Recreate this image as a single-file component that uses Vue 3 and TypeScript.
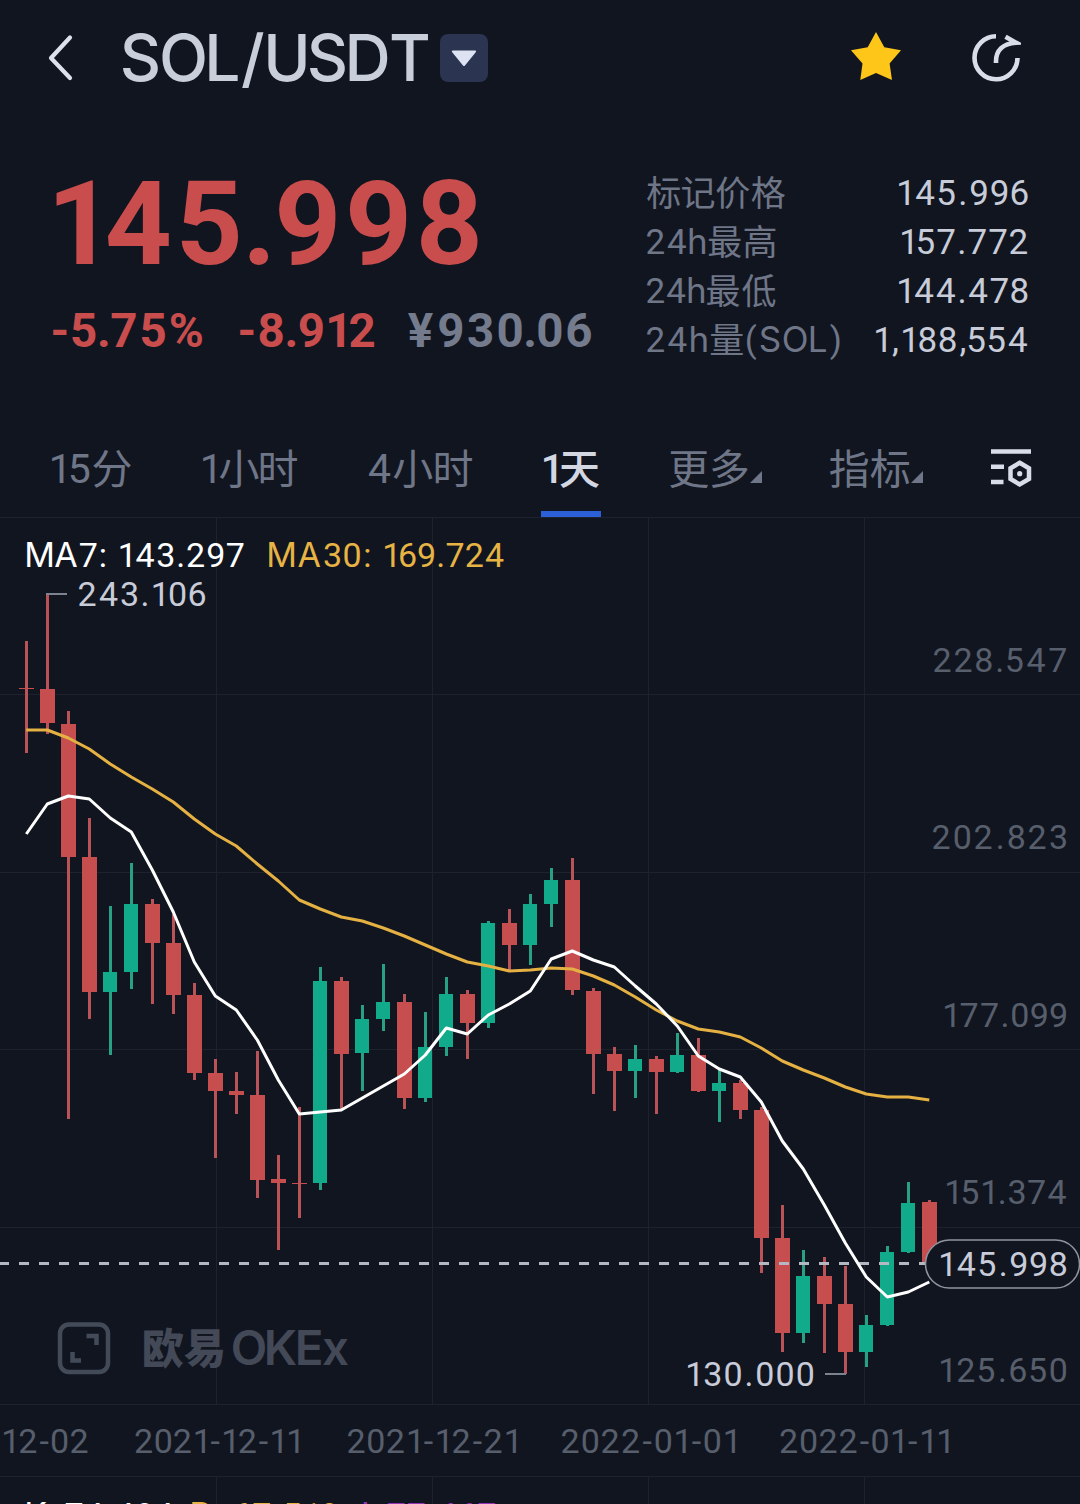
<script setup lang="ts">
import { h, type FunctionalComponent } from 'vue'

const DIGITS = 'Roboto, "Noto Sans CJK SC", sans-serif'
const LETTERS = 'Inter, Roboto, sans-serif'
const CAP = 0.711

const ctx = document.createElement('canvas').getContext('2d')!

const isLetter = (c: string) => /[A-Za-z/]/.test(c)
const isHan = (c: string) => /[\u4e00-\u9fff]/.test(c)
const kind = (c: string) => (isLetter(c) ? 'letter' : isHan(c) ? 'han' : 'digit')

/* Spreads the characters so that the gaps between their strokes are equal. */
function spread(text: string, width: number, size: number, weight: number): number[] {
  const bold = weight > 600
  const source = [...text]
  const last = source.length - 1
  const chars = source.map((c, i) => {
    ctx.font = `${weight} ${size * 4}px ${isLetter(c) ? LETTERS : DIGITS}`
    const m = ctx.measureText(c)
    if (c === ' ') return { left: 0, ink: size * 0.1, before: 0, after: 0 }
    let before = 0
    let after = 0
    if (c === '.' || c === ':') before = after = (bold ? -0.035 : 0.04) * size
    if (c === '1') {
      after = (bold ? 0 : 0.075) * size
      before = bold ? 0 : 0.04 * size
    }
    return {
      left: -m.actualBoundingBoxLeft / 4,
      ink: (m.actualBoundingBoxRight + m.actualBoundingBoxLeft) / 4,
      before: i === 0 ? 0 : before,
      after: i === last ? 0 : after,
    }
  })
  const total = chars.reduce((sum, c) => sum + c.ink + c.before + c.after, 0)
  const gap = last > 0 ? (width - total) / last : 0
  let pen = 0
  return chars.map((c) => {
    pen += c.before
    const x = pen - c.left
    pen += c.ink + c.after + gap
    return Math.round(x * 100) / 100
  })
}

interface RunProps {
  text: string
  w: number
  size: number
  x?: number
  y?: number
  weight?: number
}

const Run: FunctionalComponent<RunProps> = (p) => {
  const weight = p.weight ?? 400
  const y = p.y ?? 0
  const xs = spread(p.text, p.w, p.size, weight).map((v) => v + (p.x ?? 0))
  const parts: { text: string; kind: string; xs: number[] }[] = []
  ;[...p.text].forEach((c, i) => {
    const tail = parts[parts.length - 1]
    if (tail && tail.kind === kind(c)) {
      tail.text += c
      tail.xs.push(xs[i])
    } else {
      parts.push({ text: c, kind: kind(c), xs: [xs[i]] })
    }
  })
  return h(
    'text',
    { 'font-size': p.size, 'font-weight': weight, 'xml:space': 'preserve' },
    parts.map((part) =>
      h('tspan', {
        x: part.xs.join(' '),
        y: part.kind === 'han' ? y + p.size * 0.03 : y,
        'font-family': part.kind === 'letter' ? LETTERS : DIGITS,
      }, part.text),
    ),
  )
}
Run.props = ['text', 'w', 'size', 'x', 'y', 'weight']

/* A line of text whose box is exactly as wide as its strokes and as tall as its capitals. */
const Label: FunctionalComponent<RunProps> = (p) => {
  const cap = p.size * CAP
  return h('svg', { width: p.w, height: cap, style: 'display:block;overflow:visible;flex:none' }, [
    h(Run, { text: p.text, w: p.w, size: p.size, weight: p.weight, y: cap }),
  ])
}
Label.props = ['text', 'w', 'size', 'weight']

const stats = [
  { name: '标记价格', nw: 138, value: '145.996', vw: 128.5 },
  { name: '24h最高', nw: 128.5, value: '157.772', vw: 125 },
  { name: '24h最低', nw: 128.5, value: '144.478', vw: 128.5 },
  { name: '24h量(SOL)', nw: 192.5, value: '1,188,554', vw: 151 },
]

const tabs = [
  { text: '15分', w: 79, gap: 0 },
  { text: '1小时', w: 94, gap: 72 },
  { text: '4小时', w: 103, gap: 72 },
  { text: '1天', w: 55, gap: 71, active: true },
  { text: '更多', w: 77.5, gap: 69, more: true },
  { text: '指标', w: 79, gap: 68.5, more: true },
]

/* high, low, body top, body bottom, rising */
type Candle = [number, number, number, number, (0 | 1)?]
const candles: Candle[] = [
  [641, 753, 688, 689], [594, 734, 689, 723], [711, 1119, 724, 857], [818, 1019, 857, 992],
  [906, 1055, 972, 992, 1], [863, 989, 904, 972, 1], [899, 1004, 904, 943], [914, 1014, 943, 995],
  [983, 1080, 995, 1073], [1059, 1158, 1073, 1091], [1072, 1114, 1091, 1095], [1051, 1198, 1095, 1180],
  [1155, 1250, 1179, 1183], [1107, 1218, 1183, 1184], [967, 1190, 981, 1183, 1], [977, 1110, 981, 1054],
  [1005, 1091, 1019, 1053, 1], [964, 1031, 1002, 1019, 1], [994, 1109, 1002, 1098], [1012, 1102, 1047, 1098, 1],
  [977, 1056, 994, 1047, 1], [990, 1059, 994, 1023], [921, 1028, 923, 1023, 1], [909, 970, 923, 945],
  [894, 965, 904, 945, 1], [868, 927, 880, 904, 1], [858, 995, 880, 990], [988, 1094, 991, 1054],
  [1047, 1111, 1054, 1071], [1045, 1098, 1059, 1071, 1], [1056, 1114, 1059, 1072], [1033, 1073, 1055, 1072, 1],
  [1038, 1092, 1055, 1091], [1070, 1122, 1083, 1091, 1], [1080, 1119, 1083, 1110], [1107, 1273, 1110, 1238],
  [1205, 1352, 1238, 1333], [1250, 1343, 1276, 1333, 1], [1257, 1353, 1276, 1304], [1266, 1374, 1304, 1352],
  [1315, 1367, 1325, 1352, 1], [1246, 1326, 1252, 1325, 1], [1182, 1253, 1203, 1252, 1], [1200, 1264, 1202, 1264],
]
const ma7 = [
  834, 804, 796, 799, 818, 832, 870, 912, 962, 996, 1010, 1040, 1080, 1114, 1112, 1110, 1098, 1086, 1074, 1055,
  1028, 1034, 1015, 1004, 991, 959, 951, 960, 967, 986, 1004, 1026, 1056, 1069, 1077, 1102, 1141, 1169, 1205,
  1243, 1277, 1297, 1292, 1282,
]
const ma30 = [
  730, 730, 738, 749, 764, 777, 789, 802, 819, 834, 846, 864, 881, 900, 909, 917, 921, 928, 936, 945, 954, 962,
  966, 971, 970, 968, 969, 976, 985, 997, 1010, 1021, 1029, 1032, 1037, 1048, 1061, 1070, 1078, 1087, 1094, 1097,
  1097, 1100,
]
const line = (ys: number[]) => ys.map((y, i) => `${26.3 + i * 21},${y}`).join(' ')

const axis = [
  { text: '228.547', x: 934, w: 132, y: 671.5 },
  { text: '202.823', x: 933, w: 133, y: 849 },
  { text: '177.099', x: 945, w: 121, y: 1026.5 },
  { text: '151.374', x: 947, w: 119, y: 1204 },
  { text: '125.650', x: 941, w: 125, y: 1381.5 },
]
const dates = [
  { text: '12-02', x: 4, w: 83.5 },
  { text: '2021-12-11', x: 135.5, w: 163 },
  { text: '2021-12-21', x: 348, w: 168 },
  { text: '2022-01-01', x: 562, w: 173 },
  { text: '2022-01-11', x: 780.5, w: 168 },
]
</script>

<template>
  <div class="screen">
    <header class="top">
      <svg class="back" width="26" height="48" viewBox="0 0 26 48">
        <path d="M23 3.500 4 24 23 44" />
      </svg>
      <Label class="pair" text="SOL/USDT" :w="305" :size="64" :weight="500" />
      <div class="drop">
        <svg width="26" height="17" viewBox="0 0 26 17"><path d="M1.500.500h23q1.200.600.400 1.600L14 15.600q-1 1-2 0L1 2.100Q.400 1 1.500.500z" /></svg>
      </div>
      <svg class="star" width="50" height="49" viewBox="0 0 50 49">
        <path d="M25 0 33.300 15.300 50 18.300 38.600 31.400 41 48 25 41 9.300 48 11.500 31.400 0 18.300 16.700 15.300z" />
      </svg>
      <svg class="share" width="50" height="50" viewBox="0 0 50 50">
        <path d="M25 3.300A21.500 21.500 0 1 0 46.500 25" />
        <path d="M25 30V28.500C25 17.500 32 10.500 45 9.700L34.500 3.800" />
      </svg>
    </header>

    <section class="summary">
      <div class="quote">
        <Label class="red" text="145.998" :w="422" :size="117" :weight="700" />
        <div class="changes">
          <Label class="red" text="-5.75%" :w="149" :size="47.500" :weight="700" />
          <Label class="red" text="-8.912" :w="134" :size="47.500" :weight="700" />
          <Label class="grey" text="¥930.06" :w="183" :size="47.500" :weight="700" />
        </div>
      </div>
      <div class="stats">
        <div v-for="s in stats" :key="s.name" class="stat">
          <Label class="name" :text="s.name" :w="s.nw" :size="35" />
          <Label class="value" :text="s.value" :w="s.vw" :size="35" />
        </div>
      </div>
    </section>

    <nav class="tabs">
      <div v-for="t in tabs" :key="t.text" class="tab" :class="{ active: t.active }" :style="{ marginLeft: t.gap + 'px' }">
        <Label :text="t.text" :w="t.w" :size="41" :weight="t.active ? 500 : 400" />
        <svg v-if="t.more" class="corner" width="12" height="12" viewBox="0 0 12 12"><path d="M12 0v12H0z" /></svg>
      </div>
      <svg class="settings" width="42" height="40" viewBox="0 0 42 40">
        <path d="M1 3.500H41M1 18.700H14M1 34H13.500" />
        <path class="hex" d="M29.700 14.800 39 20.200V31L29.700 36.500 20.500 31V20.200z" />
        <circle cx="29.700" cy="25.700" r="2.600" />
      </svg>
    </nav>

    <svg class="chart" width="1080" height="987" viewBox="0 517 1080 987">
      <path
        class="grid"
        d="M0 517.500H1080M0 694.500H1080M0 872.500H1080M0 1049.500H1080M0 1227.500H1080M0 1404.500H1080M0 1476.500H1080
           M216.500 517V1404M432.500 517V1404M648.500 517V1404M864.500 517V1404M216.500 1477V1504M432.500 1477V1504M648.500 1477V1504M864.500 1477V1504"
      />
      <g class="mark">
        <rect x="60" y="1324.500" width="48" height="47.500" rx="9" />
        <path d="M86.500 1336H96.500V1345M72.500 1352V1360.500H81" />
        <Run text="欧易" :x="144" :w="79" :y="1362.500" :size="42" :weight="900" />
        <Run text="OKEx" :x="233" :w="115" :y="1365" :size="47.500" :weight="600" />
      </g>

      <g class="axis">
        <Run v-for="a in axis" :key="a.text" :text="a.text" :x="a.x" :w="a.w" :y="a.y" :size="34" />
        <Run v-for="d in dates" :key="d.text" :text="d.text" :x="d.x" :w="d.w" :y="1453" :size="34" />
      </g>

      <g v-for="(c, i) in candles" :key="i" :class="c[4] ? 'up' : 'down'">
        <rect class="wick" :x="25 + i * 21" :y="c[0]" width="3" :height="c[1] - c[0]" />
        <rect :x="19 + i * 21" :y="c[2]" :width="c[4] ? 14 : 15" :height="c[3] - c[2]" />
      </g>

      <path class="dash" d="M-1 1263.500H929" />
      <path class="leader" d="M46 594H67M825 1374H846" />
      <polyline class="ma30" :points="line(ma30)" />
      <polyline class="ma7" :points="line(ma7)" />

      <g class="light">
        <Run text="243.106" :x="79" :w="126" :y="606" :size="34" />
        <Run text="130.000" :x="688" :w="125" :y="1386" :size="34" />
      </g>
      <rect class="pill" x="925.500" y="1240" width="154" height="48" rx="24" />
      <Run class="light" text="145.998" :x="941" :w="125" :y="1276" :size="34" />

      <g class="white">
        <Run text="MA7:" :x="27" :w="78" :y="567" :size="34" />
        <Run text="143.297" :x="120.500" :w="123" :y="567" :size="34" />
        <Run text="K: 74.494" :x="27" :w="146" :y="1527" :size="34" />
      </g>
      <g class="gold">
        <Run text="MA30:" :x="269" :w="100.500" :y="567" :size="34" />
        <Run text="169.724" :x="385" :w="118.500" :y="567" :size="34" />
        <Run text="D: 67.519" :x="192" :w="145" :y="1527" :size="34" />
      </g>
      <Run class="purple" text="J: 77.467" :x="352" :w="143" :y="1527" :size="34" />
    </svg>
  </div>
</template>

<style>
body {
  background: #111520;
}
</style>

<style scoped>
.screen {
  width: 1080px;
  height: 1504px;
  overflow: hidden;
  background: #111520;
  display: flex;
  flex-direction: column;
}
svg {
  display: block;
  flex: none;
}
.top {
  height: 116px;
  box-sizing: border-box;
  padding: 0 59px 0 47px;
  display: flex;
  align-items: center;
}
.back path {
  fill: none;
  stroke: #dde1ec;
  stroke-width: 4.200;
  stroke-linecap: round;
  stroke-linejoin: round;
}
.pair {
  margin-left: 50px;
  margin-bottom: 1px;
  fill: #c9cedb;
}
.drop {
  width: 48px;
  height: 48px;
  margin-left: 12px;
  border-radius: 8px;
  background: #2b3450;
  display: flex;
  align-items: center;
  justify-content: center;
}
.drop path {
  fill: #dde3f2;
}
.star {
  margin-left: auto;
  margin-bottom: 3px;
}
.star path {
  fill: #fdc619;
}
.share {
  margin-left: 70px;
}
.share path {
  fill: none;
  stroke: #d9ddea;
  stroke-width: 4.600;
}
.summary {
  display: flex;
  height: 320px;
  box-sizing: border-box;
  padding: 65px 53px 0 53px;
  justify-content: space-between;
}
.quote > svg {
  margin-left: 3px;
}
.changes {
  margin-top: 49px;
  display: flex;
}
.changes svg + svg {
  margin-left: 38px;
}
.changes svg + svg.grey {
  margin-left: 34px;
}
.red {
  fill: #c94d4d;
}
.grey {
  fill: #747b8c;
}
.stats {
  width: 380px;
  display: flex;
  flex-direction: column;
  gap: 24px;
  margin-top: -1px;
}
.stat {
  height: 25px;
  display: flex;
  justify-content: space-between;
}
.name {
  fill: #6f7687;
}
.value {
  fill: #c8ccd9;
}
.tabs {
  height: 81px;
  display: flex;
  padding: 0 48px 0 52px;
}
.tab {
  display: flex;
  height: 81px;
  box-sizing: border-box;
  padding-top: 18px;
  fill: #6f7687;
}
.tab.active {
  fill: #d3d7e2;
  border-bottom: 6px solid #2b60d6;
  padding-left: 3px;
  padding-right: 2px;
  margin-right: -2px;
  position: relative;
  left: -2px;
}
.corner {
  margin: 17px 0 0 2px;
}
.settings {
  margin: 12px 0 0 auto;
}
.settings path {
  fill: none;
  stroke: #d9ddea;
  stroke-width: 4.500;
}
.settings circle {
  fill: #d9ddea;
}
.grid {
  fill: none;
  stroke: #1d222d;
  stroke-width: 1;
}
.mark {
  fill: #434957;
}
.mark rect,
.mark path {
  fill: none;
  stroke: #434b59;
  stroke-width: 4.500;
}
.axis {
  fill: #575e6c;
}
.down {
  fill: #c74e4f;
}
.up {
  fill: #11aa8a;
}
.down .wick {
  fill: #b95357;
}
.up .wick {
  fill: #27a084;
}
.dash {
  fill: none;
  stroke: #b3b8c2;
  stroke-width: 3;
  stroke-dasharray: 10 10;
}
.leader {
  stroke: #7c8290;
  stroke-width: 2;
}
.ma7,
.ma30 {
  fill: none;
  stroke-width: 3;
  stroke-linejoin: round;
}
.ma7 {
  stroke: #fff;
}
.ma30 {
  stroke: #e5b143;
}
.pill {
  fill: #111520;
  stroke: #8f94a0;
  stroke-width: 1.500;
}
.light {
  fill: #c8ccd8;
}
.white {
  fill: #fff;
}
.gold {
  fill: #e6b344;
}
.purple {
  fill: #9434b8;
}
</style>
